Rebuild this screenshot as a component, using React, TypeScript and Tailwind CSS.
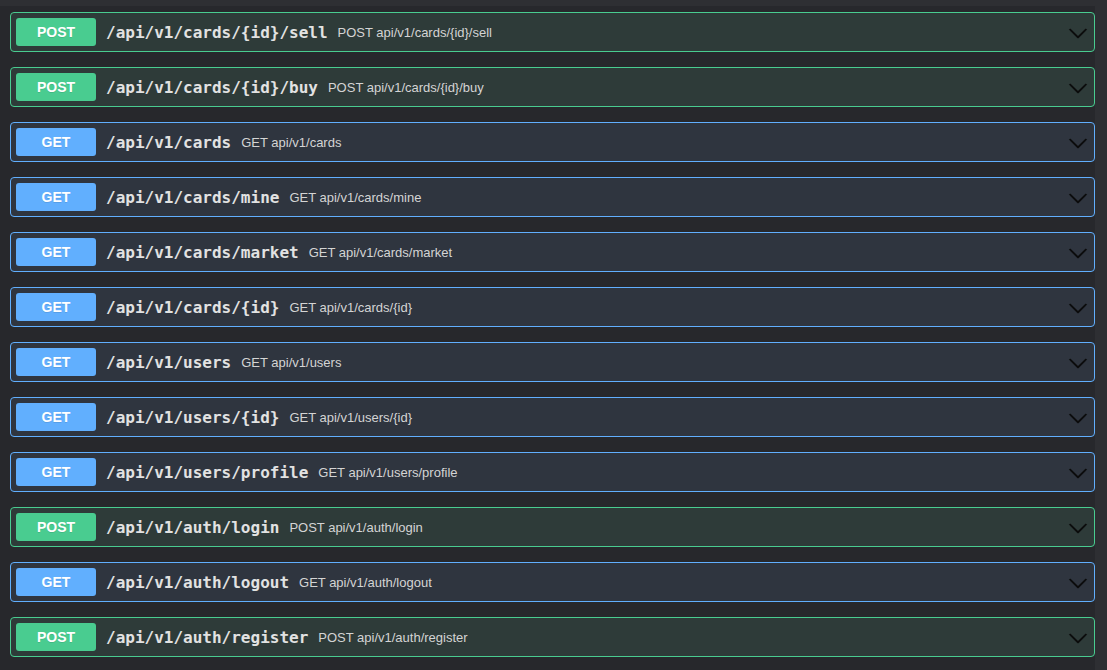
import React from "react";

type Op = { method: "GET" | "POST"; path: string; desc: string };

const ops: Op[] = [
  { method: "POST", path: "/api/v1/cards/{id}/sell", desc: "POST api/v1/cards/{id}/sell" },
  { method: "POST", path: "/api/v1/cards/{id}/buy", desc: "POST api/v1/cards/{id}/buy" },
  { method: "GET", path: "/api/v1/cards", desc: "GET api/v1/cards" },
  { method: "GET", path: "/api/v1/cards/mine", desc: "GET api/v1/cards/mine" },
  { method: "GET", path: "/api/v1/cards/market", desc: "GET api/v1/cards/market" },
  { method: "GET", path: "/api/v1/cards/{id}", desc: "GET api/v1/cards/{id}" },
  { method: "GET", path: "/api/v1/users", desc: "GET api/v1/users" },
  { method: "GET", path: "/api/v1/users/{id}", desc: "GET api/v1/users/{id}" },
  { method: "GET", path: "/api/v1/users/profile", desc: "GET api/v1/users/profile" },
  { method: "POST", path: "/api/v1/auth/login", desc: "POST api/v1/auth/login" },
  { method: "GET", path: "/api/v1/auth/logout", desc: "GET api/v1/auth/logout" },
  { method: "POST", path: "/api/v1/auth/register", desc: "POST api/v1/auth/register" },
];

function Chevron() {
  return (
    <svg width="20" height="20" viewBox="0 0 20 20" className="shrink-0 mt-[1px]">
      <path
        fill="#0a0a0a"
        stroke="#0a0a0a"
        strokeWidth="0.4"
        d="M17.418 6.109c.272-.268.709-.268.979 0s.271.701 0 .969l-7.908 7.83c-.27.268-.707.268-.979 0l-7.908-7.83c-.27-.268-.27-.701 0-.969.271-.268.709-.268.979 0L10 13.25l7.418-7.141z"
      />
    </svg>
  );
}

function Row({ op }: { op: Op }) {
  const post = op.method === "POST";
  return (
    <div
      className={
        post
          ? "flex items-center h-[40px] rounded-[4px] border border-[#49cc90] bg-[#2e3b39] pl-[5px] pr-[6px]"
          : "flex items-center h-[40px] rounded-[4px] border border-[#61affe] bg-[#2f353f] pl-[5px] pr-[6px]"
      }
    >
      <div
        className={
          post
            ? "w-[80px] h-[28px] pt-[1px] rounded-[3px] bg-[#49cc90] flex items-center justify-center text-white text-[14px] font-bold font-['Liberation_Sans',Arial,sans-serif] [text-shadow:0_1px_0_rgba(0,0,0,0.1)]"
            : "w-[80px] h-[28px] pt-[1px] rounded-[3px] bg-[#61affe] flex items-center justify-center text-white text-[14px] font-bold font-['Liberation_Sans',Arial,sans-serif] [text-shadow:0_1px_0_rgba(0,0,0,0.1)]"
        }
      >
        {op.method}
      </div>
      <span className="ml-[10px] pt-[2px] font-['DejaVu_Sans_Mono',monospace] font-bold text-[16px] text-[#e2e2e2] whitespace-nowrap">
        {op.path}
      </span>
      <span className="ml-[10px] pt-[2px] font-['Liberation_Sans',Arial,sans-serif] text-[13px] text-[#d4d4d4] whitespace-nowrap">
        {op.desc}
      </span>
      <div className="flex-1" />
      <Chevron />
    </div>
  );
}

export default function App() {
  return (
    <div className="w-[1107px] h-[670px] bg-[#2e2f33] overflow-hidden">
      <div className="mt-[6px] w-[1095px] h-[664px] bg-[#27282c] pl-[10px] pt-[6px] flex flex-col gap-[15px]">
        {ops.map((op, i) => (
          <Row key={i} op={op} />
        ))}
      </div>
    </div>
  );
}
